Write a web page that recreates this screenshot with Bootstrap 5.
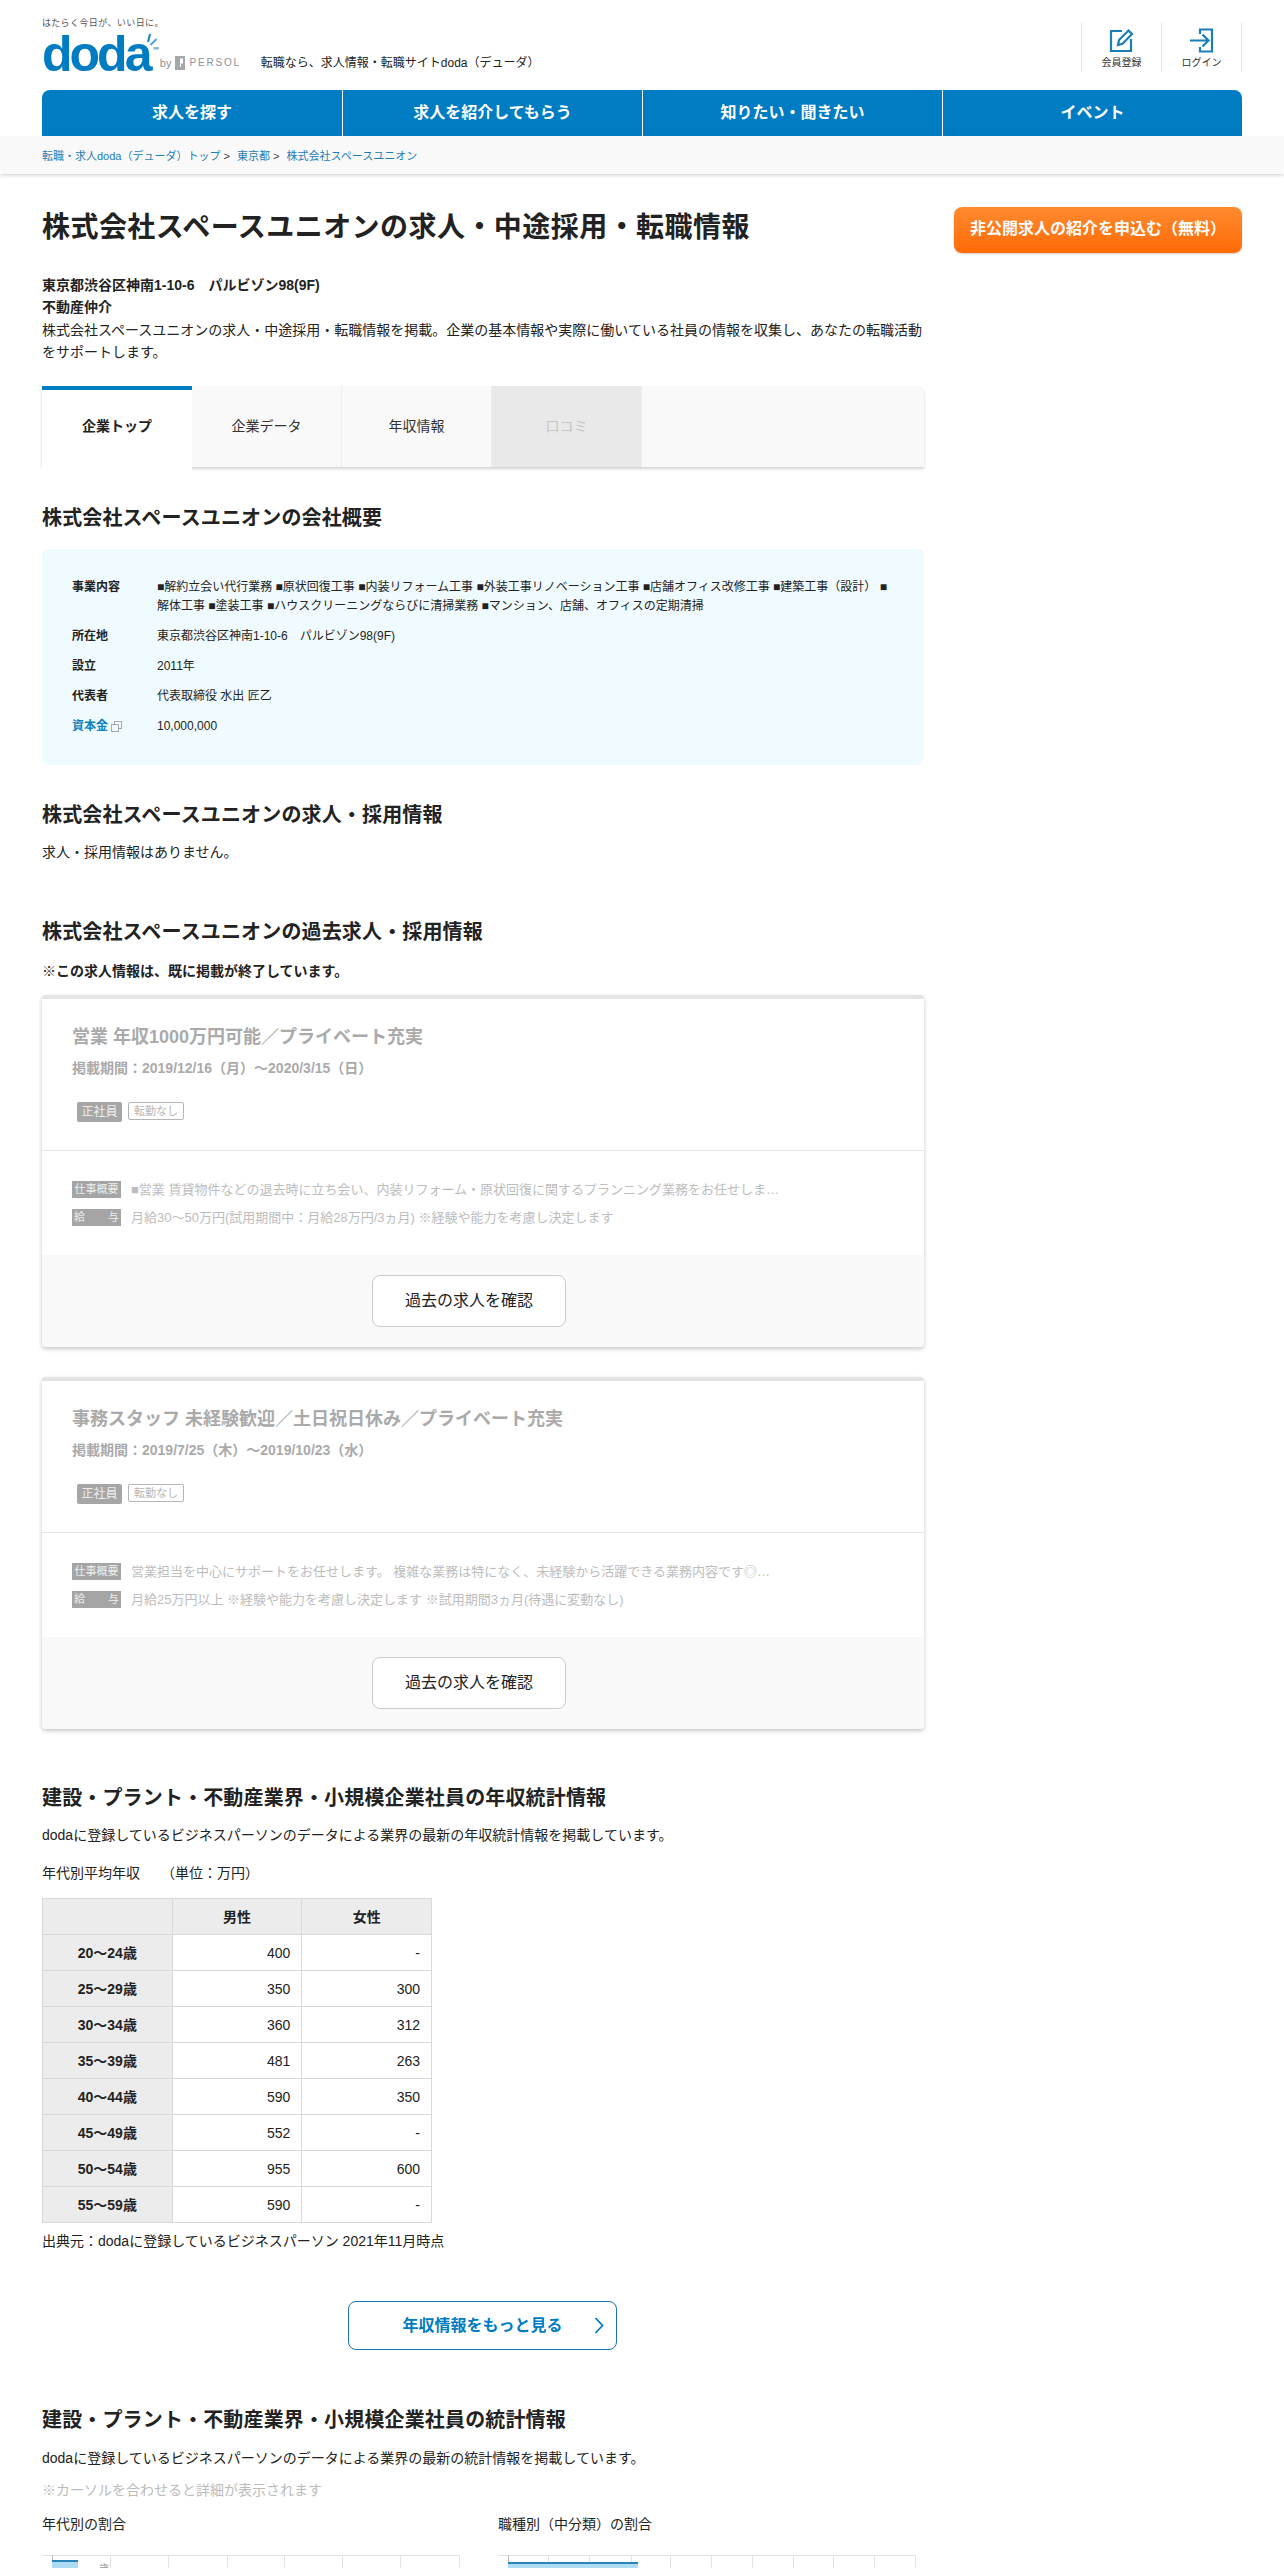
<!DOCTYPE html>
<html lang="ja">
<head>
<meta charset="utf-8">
<title>株式会社スペースユニオンの求人・中途採用・転職情報</title>
<link href="https://cdn.jsdelivr.net/npm/bootstrap@5.3.0/dist/css/bootstrap.min.css" rel="stylesheet">
<style>
:root{--dd-blue:#007cc3;}
html,body{height:2568px;overflow:hidden;}
body{font-family:"Liberation Sans","Noto Sans CJK JP",sans-serif;font-size:14px;line-height:22px;color:#222;background:#fff;}
a{text-decoration:none;}
.dd-head{height:90px;padding:0 42px;}
.dd-tagline{font-size:9px;line-height:10px;color:#555;margin-top:18px;letter-spacing:.4px;}
.dd-logoword{font-size:50px;line-height:40px;font-weight:700;color:var(--dd-blue);letter-spacing:-3px;height:40px;margin-top:6px;}
.dd-rays{margin:5px 0 0 -2px;}
.dd-by{font-size:11px;color:#8b9196;line-height:14px;margin-top:56px;margin-left:-4px;height:14px;}
.dd-persol{font-size:10px;letter-spacing:1.8px;color:#8b9196;}
.dd-copy{font-size:12px;line-height:16px;margin-left:20px;margin-top:55px;color:#222;}
.dd-tools{margin-top:23px;height:49px;border-right:1px solid #e6e6e6;}
.dd-tool{width:80px;border-left:1px solid #e6e6e6;font-size:10px;line-height:12px;color:#333;padding-top:5px;}
.dd-tool svg{display:block;margin-bottom:4px;}
.dd-gnav{margin:0 42px;height:46px;background:var(--dd-blue);border-radius:8px 8px 0 0;}
.dd-gnav .nav-link{height:46px;line-height:46px;padding:0;color:#fff;font-size:16px;font-weight:700;border-left:1px solid #fff;}
.dd-gnav .nav-item:first-child .nav-link{border-left:0;}
.dd-crumbs{height:38px;background:#f9f9f9;padding:0 42px;box-shadow:0 2px 3px rgba(0,0,0,.13);font-size:11px;line-height:41px;color:#444;position:relative;}
.dd-crumbs a{color:#1f7db5;}
.dd-crumbs span{margin-right:7px;}
.dd-body{padding:33px 42px 0;gap:30px;}
.dd-main{width:882px;flex:none;}
.dd-side{width:288px;flex:none;}
.dd-cta{display:block;width:100%;height:46px;line-height:44px;padding:0;border-radius:8px;border:0;color:#fff;font-weight:700;font-size:16px;background:linear-gradient(#ff8b30,#ff6a05);box-shadow:0 1px 2px rgba(0,0,0,.2);}
.dd-title{font-size:28px;line-height:42px;font-weight:700;margin:0;color:#222;letter-spacing:.45px;}
.dd-h2{font-size:20px;line-height:30px;font-weight:700;margin:0;color:#222;letter-spacing:.15px;}
.dd-strong{font-weight:700;margin:0;}
.dd-p{margin:0;}
.dd-tabs{margin-top:23px;height:81px;background:#f9f9f9;box-shadow:0 2px 3px rgba(0,0,0,.18);flex-wrap:nowrap;border-radius:0 6px 0 0;}
.dd-tabs .nav-link{width:150px;height:81px;line-height:81px;padding:0;text-align:center;color:#333;font-size:14px;border-right:1px solid #eee;border-radius:0;}
.dd-tabs .nav-link.active{height:86px;background:#fff;color:#222;font-weight:700;border-top:4px solid var(--dd-blue);border-right:0;line-height:73px;position:relative;}
.dd-tabs .nav-link.disabled{background:#e9e9e9;color:#c6c6c6;}
.dd-box{margin-top:16px;height:216px;background:#f0fbff;border-radius:6px;padding:29px 34px 29px 30px;font-size:12px;line-height:19px;}
.dd-dl{margin:0;display:grid;grid-template-columns:85px 1fr;row-gap:11px;}
.dd-dl dt{font-weight:700;color:#222;}
.dd-dl dd{margin:0;color:#222;}
.dd-dl .dd-link{color:#1080c0;}
.dd-copyicon{margin-left:3px;vertical-align:-2px;}
.dd-job{margin-top:0;border:0;border-top:4px solid #e4e4e4;border-radius:4px;box-shadow:0 2px 4px rgba(0,0,0,.22);height:352px;overflow:hidden;}
.dd-job + .dd-job{margin-top:30px;}
.dd-job-top{padding:23px 30px 28px;border-bottom:1px solid #e6e6e6;}
.dd-job-title{font-size:18px;line-height:30px;font-weight:700;color:#aaa;margin:0;}
.dd-job-date{font-size:14px;line-height:22px;font-weight:700;color:#aaa;margin:5px 0 23px;}
.dd-tags{padding-left:5px;gap:6px;height:20px;}
.dd-tag-a{background:#a6a6a6;color:#eee;font-size:12px;font-weight:400;line-height:20px;height:20px;width:45px;padding:0;border-radius:2px;text-align:center;}
.dd-tag-b{background:#fff;color:#b5b5b5;border:1px solid #b5b5b5;font-size:11px;font-weight:400;line-height:16px;height:18px;width:56px;padding:0;border-radius:2px;text-align:center;}
.dd-job-mid{padding:30px 30px 29px;height:104px;}
.dd-job-row{height:17px;line-height:17px;gap:10px;color:#bdbdbd;font-size:13px;white-space:nowrap;}
.dd-job-row + .dd-job-row{margin-top:11px;}
.dd-lab{width:49px;flex:none;background:#a5a5a5;color:#eee;font-size:11px;text-align:center;}
.dd-lab-wide{text-align:justify;text-align-last:justify;padding:0 2px;}
.dd-job-foot{height:92px;background:#f9f9f9;padding:20px 28px 0 0;text-align:center;}
.dd-oldbtn{width:194px;height:52px;line-height:50px;padding:0;background:#fff;border:1px solid #ccc;border-radius:8px;color:#222;font-size:16px;}
.dd-table{width:390px;table-layout:fixed;margin:14px 0 0;--bs-table-border-color:#d9d9d9;border-color:#d9d9d9;}
.dd-table th,.dd-table td{height:36px;padding:0 11px;line-height:34px;font-size:14px;color:#222;vertical-align:middle;}
.dd-table th{background:#ececec;--bs-table-bg:#ececec;text-align:center;font-weight:700;}
.dd-table td{text-align:right;}
.dd-more{display:grid;grid-template-columns:1fr auto 1fr;align-items:center;width:269px;height:49px;margin:49px 0 0 306px;padding:0 12px;border:1px solid #1a76ad;border-radius:8px;color:var(--dd-blue);font-size:16px;font-weight:700;background:#fff;}
.dd-more svg{justify-self:end;}
.dd-muted{color:#bbb;}
.dd-charts{gap:38px;margin-top:12px;}
.dd-chart{width:418px;flex:none;}
.dd-chart svg{display:block;margin-top:20px;}
</style>
</head>
<body>
<header class="dd-head d-flex justify-content-between">
  <div class="d-flex">
    <div>
      <div class="dd-tagline">はたらく今日が、いい日に。</div>
      <div class="d-flex">
        <div class="dd-logoword">doda</div>
        <svg class="dd-rays" width="13" height="20" viewBox="0 0 13 20" aria-hidden="true"><path d="M1 9 3 1" stroke="#1a86c8" stroke-width="2" fill="none"/><path d="M3.500 12 9.500 6" stroke="#4aa3d8" stroke-width="2" fill="none"/><path d="M6.500 15.500 12 15" stroke="#8fb9cf" stroke-width="2.500" fill="none"/></svg>
      </div>
    </div>
    <div class="dd-by d-flex align-items-center gap-1">
      <span>by</span>
      <svg width="10" height="14" viewBox="0 0 10 14" aria-hidden="true"><rect width="10" height="14" fill="#a3a7aa"/><path d="M5 2.500h3v5H6v3.500H5z" fill="#fff"/></svg>
      <span class="dd-persol">PERSOL</span>
    </div>
    <div class="dd-copy">転職なら、求人情報・転職サイトdoda（デューダ）</div>
  </div>
  <div class="dd-tools d-flex">
    <a class="dd-tool d-flex flex-column align-items-center" href="#">
      <svg width="25" height="25" viewBox="0 0 25 25" fill="none" stroke="#1a7fb8" stroke-width="2.200" aria-hidden="true"><path d="M13 3H2v20h20V11"/><path d="M9 17l1-5L19.500 2.500l3.500 3.500-9.500 9.700z"/></svg>
      会員登録
    </a>
    <a class="dd-tool d-flex flex-column align-items-center" href="#">
      <svg width="25" height="25" viewBox="0 0 25 25" fill="none" stroke="#1a7fb8" stroke-width="2.200" aria-hidden="true"><path d="M11 6V1.500h12v22H11V19"/><path d="M1 12.500h18M13.500 6.500l6 6-6 6"/></svg>
      ログイン
    </a>
  </div>
</header>
<nav class="dd-gnav nav nav-justified">
  <div class="nav-item"><a class="nav-link" href="#">求人を探す</a></div>
  <div class="nav-item"><a class="nav-link" href="#">求人を紹介してもらう</a></div>
  <div class="nav-item"><a class="nav-link" href="#">知りたい・聞きたい</a></div>
  <div class="nav-item"><a class="nav-link" href="#">イベント</a></div>
</nav>
<div class="dd-crumbs"><span><a href="#">転職・求人doda（デューダ）トップ</a> &gt;</span><span><a href="#">東京都</a> &gt;</span><span><a href="#">株式会社スペースユニオン</a></span></div>

<div class="dd-body d-flex">
  <main class="dd-main">
    <h1 class="dd-title">株式会社スペースユニオンの求人・中途採用・転職情報</h1>
    <p class="dd-strong" style="margin-top:25px">東京都渋谷区神南1-10-6　パルビゾン98(9F)</p>
    <p class="dd-strong">不動産仲介</p>
    <p class="dd-p" style="margin-top:1px">株式会社スペースユニオンの求人・中途採用・転職情報を掲載。企業の基本情報や実際に働いている社員の情報を収集し、あなたの転職活動をサポートします。</p>

    <nav class="dd-tabs nav">
      <a class="nav-link active" href="#">企業トップ</a>
      <a class="nav-link" href="#">企業データ</a>
      <a class="nav-link" href="#">年収情報</a>
      <a class="nav-link disabled" href="#">口コミ</a>
    </nav>

    <h2 class="dd-h2" style="margin-top:36px">株式会社スペースユニオンの会社概要</h2>
    <div class="dd-box">
      <dl class="dd-dl">
        <dt>事業内容</dt><dd>■解約立会い代行業務 ■原状回復工事 ■内装リフォーム工事 ■外装工事リノベーション工事 ■店舗オフィス改修工事 ■建築工事（設計） ■解体工事 ■塗装工事 ■ハウスクリーニングならびに清掃業務 ■マンション、店舗、オフィスの定期清掃</dd>
        <dt>所在地</dt><dd>東京都渋谷区神南1-10-6　パルビゾン98(9F)</dd>
        <dt>設立</dt><dd>2011年</dd>
        <dt>代表者</dt><dd>代表取締役 水出 匠乙</dd>
        <dt class="dd-link">資本金<svg class="dd-copyicon" width="11" height="11" viewBox="0 0 11 11" fill="none" stroke="#aaa" aria-hidden="true"><rect x="3.500" y=".5" width="7" height="7"/><rect x=".5" y="3.500" width="7" height="7" fill="#f0fbff"/></svg></dt><dd>10,000,000</dd>
      </dl>
    </div>

    <h2 class="dd-h2" style="margin-top:35px">株式会社スペースユニオンの求人・採用情報</h2>
    <p class="dd-p" style="margin-top:11px">求人・採用情報はありません。</p>

    <h2 class="dd-h2" style="margin-top:54px">株式会社スペースユニオンの過去求人・採用情報</h2>
    <p class="dd-strong" style="margin:13px 0 13px">※この求人情報は、既に掲載が終了しています。</p>

    <article class="dd-job card">
      <div class="dd-job-top">
        <h3 class="dd-job-title">営業 年収1000万円可能／プライベート充実</h3>
        <p class="dd-job-date">掲載期間：2019/12/16（月）～2020/3/15（日）</p>
        <div class="dd-tags d-flex"><span class="dd-tag-a badge">正社員</span><span class="dd-tag-b badge">転勤なし</span></div>
      </div>
      <div class="dd-job-mid">
        <div class="dd-job-row d-flex"><span class="dd-lab">仕事概要</span><span>■営業 賃貸物件などの退去時に立ち会い、内装リフォーム・原状回復に関するプランニング業務をお任せしま…</span></div>
        <div class="dd-job-row d-flex"><span class="dd-lab dd-lab-wide">給 与</span><span>月給30～50万円(試用期間中：月給28万円/3ヵ月) ※経験や能力を考慮し決定します</span></div>
      </div>
      <div class="dd-job-foot"><a class="dd-oldbtn btn" href="#">過去の求人を確認</a></div>
    </article>

    <article class="dd-job card">
      <div class="dd-job-top">
        <h3 class="dd-job-title">事務スタッフ 未経験歓迎／土日祝日休み／プライベート充実</h3>
        <p class="dd-job-date">掲載期間：2019/7/25（木）～2019/10/23（水）</p>
        <div class="dd-tags d-flex"><span class="dd-tag-a badge">正社員</span><span class="dd-tag-b badge">転勤なし</span></div>
      </div>
      <div class="dd-job-mid">
        <div class="dd-job-row d-flex"><span class="dd-lab">仕事概要</span><span>営業担当を中心にサポートをお任せします。 複雑な業務は特になく、未経験から活躍できる業務内容です◎…</span></div>
        <div class="dd-job-row d-flex"><span class="dd-lab dd-lab-wide">給 与</span><span>月給25万円以上 ※経験や能力を考慮し決定します ※試用期間3ヵ月(待遇に変動なし)</span></div>
      </div>
      <div class="dd-job-foot"><a class="dd-oldbtn btn" href="#">過去の求人を確認</a></div>
    </article>

    <h2 class="dd-h2" style="margin-top:54px">建設・プラント・不動産業界・小規模企業社員の年収統計情報</h2>
    <p class="dd-p" style="margin-top:11px">dodaに登録しているビジネスパーソンのデータによる業界の最新の年収統計情報を掲載しています。</p>
    <p class="dd-p" style="margin-top:16px">年代別平均年収　　（単位：万円）</p>
    <table class="dd-table table table-bordered">
      <thead><tr><th></th><th>男性</th><th>女性</th></tr></thead>
      <tbody>
        <tr><th>20～24歳</th><td>400</td><td>-</td></tr>
        <tr><th>25～29歳</th><td>350</td><td>300</td></tr>
        <tr><th>30～34歳</th><td>360</td><td>312</td></tr>
        <tr><th>35～39歳</th><td>481</td><td>263</td></tr>
        <tr><th>40～44歳</th><td>590</td><td>350</td></tr>
        <tr><th>45～49歳</th><td>552</td><td>-</td></tr>
        <tr><th>50～54歳</th><td>955</td><td>600</td></tr>
        <tr><th>55～59歳</th><td>590</td><td>-</td></tr>
      </tbody>
    </table>
    <p class="dd-p" style="margin-top:7px">出典元：dodaに登録しているビジネスパーソン 2021年11月時点</p>
    <a class="dd-more" href="#"><span></span><span>年収情報をもっと見る</span>
      <svg width="10" height="17" viewBox="0 0 10 17" fill="none" stroke="#007cc3" stroke-width="1.800" aria-hidden="true"><path d="M1.500 1l7 7.500-7 7.500"/></svg>
    </a>

    <h2 class="dd-h2" style="margin-top:55px">建設・プラント・不動産業界・小規模企業社員の統計情報</h2>
    <p class="dd-p" style="margin-top:12px">dodaに登録しているビジネスパーソンのデータによる業界の最新の統計情報を掲載しています。</p>
    <p class="dd-p dd-muted" style="margin-top:10px">※カーソルを合わせると詳細が表示されます</p>
    <div class="dd-charts d-flex">
      <div class="dd-chart">
        <div>年代別の割合</div>
        <svg width="418" height="14" viewBox="0 0 418 14" aria-hidden="true">
          <g stroke="#e2e2e2"><path d="M0 .5H418M68.500 0V14M126.500 0V14M185.500 0V14M242.500 0V14M300.500 0V14M358.500 0V14M417.500 0V14"/></g>
          <path d="M10.500 0V14" stroke="#bbb"/>
          <rect x="10" y="5" width="26" height="9" fill="#aedcf5"/><path d="M10 6H36" stroke="#2a84b8" stroke-width="2"/>
          <text x="57" y="17" font-size="10" fill="#999">歳</text>
        </svg>
      </div>
      <div class="dd-chart">
        <div>職種別（中分類）の割合</div>
        <svg width="418" height="14" viewBox="0 0 418 14" aria-hidden="true">
          <g stroke="#e2e2e2"><path d="M0 .5H418M50.500 0V14M91.500 0V14M133.500 0V14M172.500 0V14M213.500 0V14M254.500 0V14M295.500 0V14M335.500 0V14M376.500 0V14M417.500 0V14"/></g>
          <path d="M10.500 0V14" stroke="#bbb"/>
          <rect x="10" y="7" width="130" height="7" fill="#aedcf5"/><path d="M10 8H140" stroke="#2a84b8" stroke-width="2"/>
        </svg>
      </div>
    </div>
  </main>
  <aside class="dd-side"><a class="dd-cta btn" href="#">非公開求人の紹介を申込む（無料）</a></aside>
</div>
<script src="https://cdn.jsdelivr.net/npm/bootstrap@5.3.0/dist/js/bootstrap.bundle.min.js"></script>
</body>
</html>
